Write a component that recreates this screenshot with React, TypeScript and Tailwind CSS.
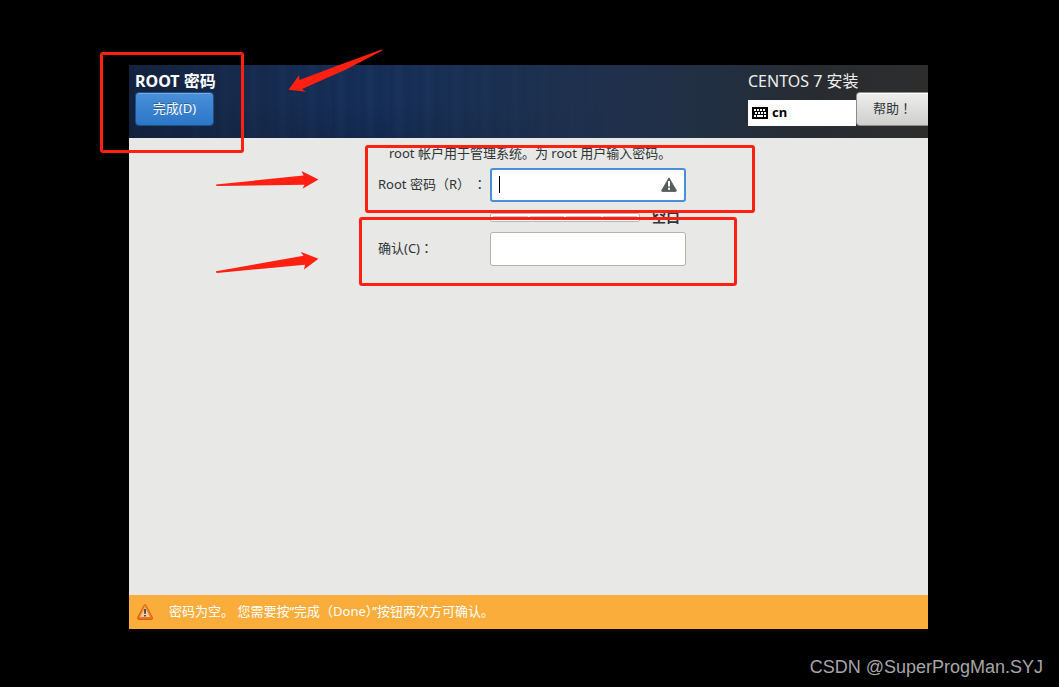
import { useState } from "react";

function KeyboardIcon() {
  return (
    <svg width="16" height="12" viewBox="0 0 16 12" aria-hidden="true" shapeRendering="crispEdges">
      <rect width="16" height="12" rx="1" fill="#000" />
      <g fill="#fff">
        <rect x="2" y="2" width="2" height="2" />
        <rect x="5" y="2" width="2" height="2" />
        <rect x="8" y="2" width="2" height="2" />
        <rect x="11" y="2" width="2" height="2" />
        <rect x="3" y="5" width="2" height="2" />
        <rect x="6" y="5" width="2" height="2" />
        <rect x="9" y="5" width="2" height="2" />
        <rect x="12" y="5" width="2" height="2" />
        <rect x="2" y="8" width="2" height="2" />
        <rect x="5" y="8" width="6" height="2" />
        <rect x="12" y="8" width="2" height="2" />
      </g>
    </svg>
  );
}

function FieldWarningIcon() {
  return (
    <svg width="16" height="15" viewBox="0 0 16 15" aria-hidden="true">
      <path
        d="M8 0.8 L15.2 13.2 Q15.7 14.4 14.6 14.5 H1.4 Q0.3 14.4 0.8 13.2 Z"
        fill="#555c5c"
        stroke="#555c5c"
        strokeWidth="0.8"
        strokeLinejoin="round"
      />
      <path d="M7 4 H9 V9.4 H7 Z M7 10.8 H9 V12.8 H7 Z" fill="#fff" />
    </svg>
  );
}

function StatusWarningIcon() {
  return (
    <svg width="16" height="16" viewBox="0 0 16 16" aria-hidden="true">
      <defs>
        <linearGradient id="warn" x1="0" y1="0" x2="0" y2="1">
          <stop offset="0" stopColor="#f39a45" />
          <stop offset="1" stopColor="#ee7418" />
        </linearGradient>
      </defs>
      <path
        d="M7 1.3 Q8 0 9 1.3 L15.4 13.6 Q15.9 15.3 14.4 15.4 H1.6 Q0.1 15.3 0.6 13.6 Z"
        fill="url(#warn)"
        stroke="#c9560c"
        strokeWidth="0.9"
      />
      <path d="M8 3.5 L13 13 H3 Z" fill="#f7c9a0" />
      <path d="M7.2 5 H8.8 V9.8 H7.2 Z M7.2 11 H8.8 V12.6 H7.2 Z" fill="#333" />
    </svg>
  );
}

function CenteredMark({ children }: { children: string }) {
  return (
    <span lang="zh-Hant" className="font-['Noto_Sans_CJK_TC',sans-serif] leading-none">
      {children}
    </span>
  );
}

function Header() {
  return (
    <header className="relative flex h-[73px] items-start justify-between overflow-hidden bg-[linear-gradient(90deg,#14233f_0%,#172b4d_14%,#17305a_30%,#1b3153_44%,#20304b_62%,#222f40_75%,#282c31_86%,#2d2d2d_100%)]">
      <div
        aria-hidden="true"
        className="absolute inset-0 bg-[repeating-linear-gradient(90deg,rgba(0,10,40,0.1)_0px,transparent_5px,rgba(50,100,170,0.06)_9px,transparent_13px,rgba(0,10,40,0.08)_17px,transparent_29px),linear-gradient(180deg,transparent_50%,rgba(0,0,0,0.12)_100%)] [mask-image:linear-gradient(90deg,rgba(0,0,0,0.4),black_30%,transparent_60%)]"
      />
      <div className="relative flex flex-col items-start pt-1 pl-1.5">
        <h1 className="h-[23px] text-[16px] leading-6 font-bold text-white">ROOT 密码</h1>
        <button
          type="button"
          className="h-[34px] w-[79px] rounded-sm border border-[#1c5187] bg-linear-to-b from-[#4a90d9] to-[#2a76c6] text-[13px] text-white inset-shadow-[0_1px_0_rgba(255,255,255,0.25)] text-shadow-[0_-1px_0_rgba(0,0,0,0.3)]"
        >
          完成(D)
        </button>
      </div>
      <div className="relative flex w-[180px] flex-col pt-1">
        <p className="h-[23px] text-[16px] leading-6 text-[#eeeeec]">CENTOS 7 安装</p>
        <div className="flex items-end">
          <button
            type="button"
            className="flex h-[26px] flex-1 items-center gap-1 bg-white pl-1 text-[13px] font-bold text-black"
          >
            <KeyboardIcon />
            cn
          </button>
          <button
            type="button"
            className="h-[34px] w-[72px] rounded-l-sm border border-r-0 border-[#8b8d88] bg-linear-to-b from-[#eeeeed] to-[#cfcfcd] text-[13px] text-[#2e3436] inset-shadow-[0_1px_0_#fff]"
          >
            帮助<CenteredMark>！</CenteredMark>
          </button>
        </div>
      </div>
    </header>
  );
}

function PasswordForm() {
  const [password, setPassword] = useState("");
  const [confirm, setConfirm] = useState("");
  return (
    <form className="flex-1 bg-[#e8e8e6] pt-[5px] pl-[249px] text-[13px] text-[#2e3436]">
      <p className="pl-[11px] leading-5">root 帐户用于管理系统。为 root 用户输入密码。</p>
      <div className="grid grid-cols-[112px_196px] items-center pt-[5px]">
        <label htmlFor="root-password" className="whitespace-nowrap">
          Root 密码（R） <CenteredMark>：</CenteredMark>
        </label>
        <div className="relative flex">
          <input
            id="root-password"
            type="password"
            value={password}
            onChange={(e) => setPassword(e.target.value)}
            className="h-[34px] w-full rounded-[3px] border-2 border-[#4a90d9] bg-white pr-8 pl-2 outline-none"
          />
          {password === "" && (
            <span aria-hidden="true" className="absolute top-2 left-[9px] h-[17px] w-px bg-black" />
          )}
          <span className="absolute top-[9px] right-[9px]">
            <FieldWarningIcon />
          </span>
        </div>
        <div className="col-start-2 flex h-[30px] items-center gap-3">
          <div
            role="meter"
            aria-label="密码强度"
            aria-valuenow={0}
            aria-valuemin={0}
            aria-valuemax={4}
            className="flex h-[9px] w-[150px] gap-0.5 rounded-xs border border-[#b9bab6] bg-white p-0.5"
          >
            <span className="flex-1 border border-[#c4c5c1]" />
            <span className="flex-1 border border-[#c4c5c1]" />
            <span className="flex-1 border border-[#c4c5c1]" />
            <span className="flex-1 border border-[#c4c5c1]" />
          </div>
          <span className="text-[14px] leading-4 font-bold whitespace-nowrap">空白</span>
        </div>
        <label htmlFor="confirm-password">
          确认(C)<CenteredMark>：</CenteredMark>
        </label>
        <input
          id="confirm-password"
          type="password"
          value={confirm}
          onChange={(e) => setConfirm(e.target.value)}
          className="h-[34px] w-full rounded-[3px] border border-[#b3b4b0] bg-white px-2 outline-none"
        />
      </div>
    </form>
  );
}

function Annotations() {
  return (
    <div aria-hidden="true" className="pointer-events-none absolute inset-0">
      <div className="absolute top-[52px] left-[100px] h-[101px] w-[144px] rounded-[3px] border-3 border-[#ff2012]" />
      <div className="absolute top-[145px] left-[365px] h-[68px] w-[390px] rounded-[3px] border-3 border-[#ff2012]" />
      <div className="absolute top-[217px] left-[359px] h-[69px] w-[378px] rounded-[3px] border-3 border-[#ff2012]" />
      <svg className="absolute top-0 left-0" width="400" height="290" viewBox="0 0 400 290" fill="#ff2012">
        <path d="M381.5 49.5 Q383 50 381.5 51 L346 69.5 L302 89 L306 91.8 L288.5 89.7 L299 75.3 L299.5 80 L342 64 Z" />
        <path d="M216 184.5 L303.5 175.5 L301.5 171 L318.5 179.5 L302.5 188.8 L304.5 184.8 L217 186 Q215.5 185.5 216 184.5 Z" />
        <path d="M216 271.3 L303.5 255.7 L300.5 251.7 L318.5 258.8 L304 269.5 L305 264.8 L217 273 Q215.5 272.5 216 271.3 Z" />
      </svg>
    </div>
  );
}

export default function App() {
  return (
    <div className="relative flex min-h-screen flex-col bg-black pt-[65px] font-['Noto_Sans','Noto_Sans_CJK_SC',sans-serif]">
      <main className="mr-[131px] ml-[129px] flex flex-1 flex-col">
        <Header />
        <PasswordForm />
        <div role="status" className="flex h-[34px] items-center gap-4 bg-[#fbad3c] pl-2 text-[13px] text-white">
          <StatusWarningIcon />
          <p>密码为空。 您需要按“完成（Done）”按钮两次方可确认。</p>
        </div>
      </main>
      <footer className="flex h-[58px] items-end justify-end pr-4 pb-1.5 font-['Liberation_Sans',sans-serif] text-[18px] leading-7 text-[#a6a6a6]">
        CSDN @SuperProgMan.SYJ
      </footer>
      <Annotations />
    </div>
  );
}
